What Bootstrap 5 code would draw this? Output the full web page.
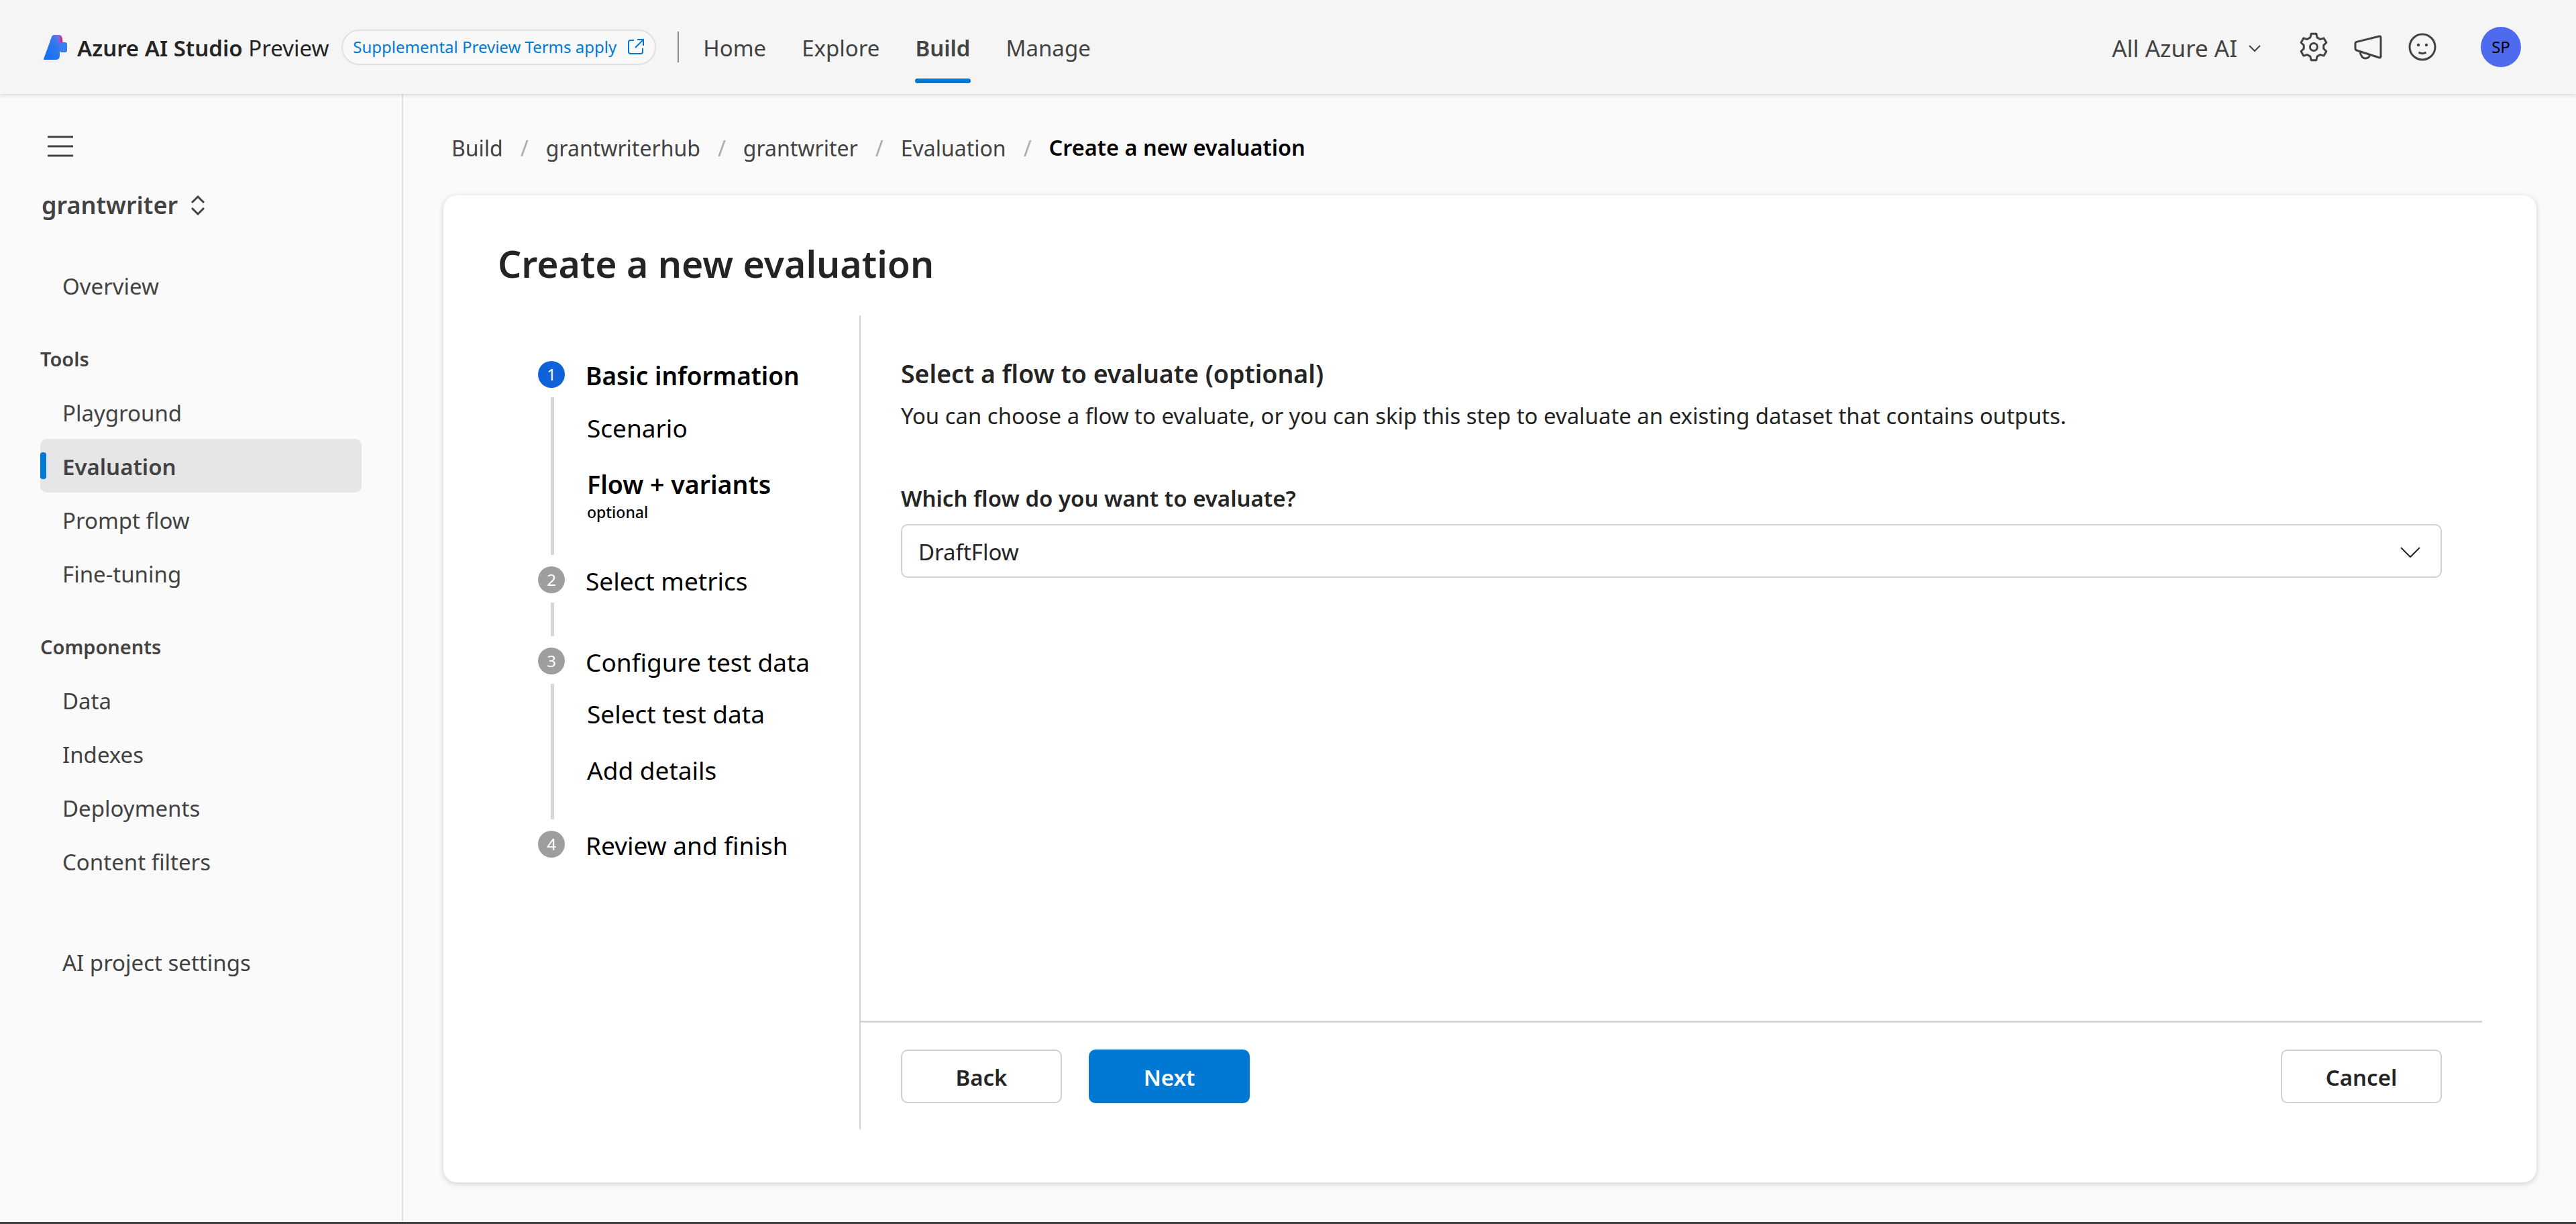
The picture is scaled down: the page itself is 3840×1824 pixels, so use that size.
<!DOCTYPE html>
<html lang="en">
<head>
<meta charset="utf-8">
<title>Create a new evaluation</title>
<link href="https://cdn.jsdelivr.net/npm/bootstrap@5.3.0/dist/css/bootstrap.min.css" rel="stylesheet">
<style>
html,body{height:100%;}
body{font-family:"Noto Sans","Open Sans",sans-serif;font-size:33px;color:#242424;background:#fafafa;overflow:hidden;}
.shell{height:1824px;border-bottom:3px solid #444;}
.topbar{height:140px;flex:none;background:#f5f5f5;box-shadow:0 2px 5px rgba(0,0,0,.14);position:relative;z-index:2;padding:0 82px 0 65px;}
.brand-logo{width:35px;height:37px;flex:none;}
.brand{margin-left:15px;color:#242424;white-space:nowrap;font-size:33px;padding-top:4px;}
.brand b{font-weight:600;}
.terms-pill{margin-left:19px;height:53px;width:469px;border:2px solid #e0e0e0;border-radius:27px;color:#0078d4;font-size:24px;background:#f8f8f8;padding:0 16px 0 15px;white-space:nowrap;}
.bar-div{width:2px;height:46px;background:#8a8a8a;margin:0 36px 0 32px;}
.top-nav{gap:53px;height:140px;}
.top-link{color:#424242;height:140px;display:flex;align-items:center;position:relative;text-decoration:none;font-size:33px;padding-top:4px;}
.top-link.sel{font-weight:600;}
.top-link.sel::after{content:"";position:absolute;left:0;right:0;top:117px;height:7px;background:#0078d4;border-radius:4px;}
.scope{font-size:35px;color:#424242;white-space:nowrap;padding-top:4px;}
.tool-row{gap:37px;margin-left:56px;}
.tool-ico{width:44px;height:44px;flex:none;}
.avatar{width:60px;height:60px;background:#4f6bed;color:#000;font-size:24px;flex:none;margin-left:28px;}
.body-row{height:1681px;}
.sidenav{width:601px;flex:none;background:#fafafa;border-right:2px solid #e0e0e0;padding:62px 60px 0 60px;}
.ham{width:38px;height:32px;margin-left:11px;display:block;}
.proj{font-size:36px;font-weight:600;color:#424242;margin:46px 0 0 2px;line-height:52px;}
.proj svg{margin-left:18px;}
.nav-item-x{display:flex;align-items:center;height:80px;padding:4px 0 0 33px;color:#424242;text-decoration:none;position:relative;border-radius:10px;font-size:33px;}
.nav-item-x.sel{background:#e6e6e6;font-weight:600;}
.nav-item-x.sel::before{content:"";position:absolute;left:0;top:20px;height:40px;width:9px;background:#0078d4;border-radius:4px;}
.nav-head{font-size:29px;font-weight:600;color:#424242;height:40px;display:flex;align-items:center;}
.nav-first{margin-top:53px;}
.nav-block{margin:19px 0 2px;}
.nav-gap{margin-top:50px;}
.nav-last{margin-top:70px;}
.crumbs{height:151px;padding:10px 0 0 72px;margin:0;font-size:32px;color:#424242;}
.crumb-sep{color:#adadad;margin:0 26px;}
.crumb-cur{font-weight:600;color:#000;font-size:32.5px;}
.main-x{min-width:0;}
.panel{margin:0 59px 0 60px;height:1471px;background:#fff;border-radius:20px;box-shadow:0 2px 8px rgba(0,0,0,.18);padding:0 0 0 81px;}
.panel-title{font-size:55.3px;font-weight:600;color:#242424;height:179px;margin:0;padding-top:66px;line-height:72px;}
.panel-body{height:1213px;}
.steps{width:539px;flex:none;padding:68px 0 0 60px;color:#000;}
.step-head{height:40px;display:flex;align-items:center;font-size:37px;white-space:nowrap;}
.step-label{padding-top:3px;}
.step-num{width:40px;height:40px;border-radius:50%;background:#9e9e9e;color:#fff;font-size:24px;flex:none;margin-right:31px;}
.step-num.on{background:#0f62d8;}
.step-head.on{font-weight:600;}
.step-rail{display:flow-root;border-left:5px solid #d6d6d6;margin:14px 0 17px 19px;padding-left:49px;}
.rail-short{height:50px;}
.sub-step{font-size:37px;line-height:48px;white-space:nowrap;margin-top:36px;}
.sub-step.first{margin-top:22px;}
.sub-step.first-b{margin-top:21px;}
.sub-step.on{font-weight:600;font-size:37.5px;}
.opt{font-size:23px;line-height:24px;font-weight:500;margin-top:5px;}
.rail-end{height:52px;}
.rail-end-b{height:49px;}
.wizard{flex:1 1 auto;border-left:2px solid #d1d1d1;min-width:0;}
.wiz-main{flex:1 1 auto;padding:0 141px 0 60px;position:relative;}
.wiz-h{font-size:37.5px;font-weight:600;color:#242424;margin:0;padding-top:63px;line-height:48px;}
.wiz-p{font-size:32.9px;margin:15px 0 0;color:#242424;line-height:48px;}
.wiz-l{font-size:33px;font-weight:600;color:#242424;margin:75px 0 0;line-height:48px;display:block;}
.flow-select{height:80px;margin:14px 0 0;border:2px solid #d1d1d1;border-radius:10px;font-size:33px;padding:3px 30px 0 24px;color:#242424;background:#fff;}
.wiz-foot{height:162px;flex:none;border-top:3px solid #d6d6d6;margin-right:81px;padding:40px 60px 0 60px;}
.btn-x{width:240px;height:80px;border-radius:10px;font-size:33px;font-weight:600;padding:2px 0 0;line-height:1;}
.btn-ghost{background:#fff;border:2px solid #d1d1d1;color:#242424;}
.btn-go{background:#0078d4;border:2px solid #0078d4;color:#fff;margin-left:40px;}
</style>
</head>
<body>
<div class="shell d-flex flex-column">
  <header class="topbar d-flex align-items-center">
    <svg class="brand-logo" viewBox="0 0 35 37"><defs><linearGradient id="lg" x1="0" y1="1" x2="1" y2="0"><stop offset="0" stop-color="#0f6cf0"/><stop offset=".65" stop-color="#2f78ee"/><stop offset="1" stop-color="#7f6fe0"/></linearGradient></defs><path d="M23 0 Q27 0 28 6 L29 14 H24 Z" fill="#cf2d9c"/><path d="M0 36 L12 3 Q13 0 16 0 H24 V31 Q24 37 18 37 H1 Q0 37 0 36Z" fill="url(#lg)"/><rect x="24" y="11" width="11" height="15" rx="3" fill="#3a7df0"/></svg>
    <span class="brand"><b>Azure AI Studio</b> Preview</span>
    <span class="terms-pill d-inline-flex align-items-center justify-content-between">Supplemental Preview Terms apply <svg width="25" height="24" viewBox="0 0 25 24" fill="none" stroke="#0078d4" stroke-width="2"><path d="M10 2H5Q2 2 2 5V19Q2 22 5 22H20Q23 22 23 19V14M15 1H24V10M24 1L12 13"/></svg></span>
    <span class="bar-div"></span>
    <nav class="top-nav d-flex">
      <a class="top-link" href="#">Home</a><a class="top-link" href="#">Explore</a><a class="top-link sel" href="#">Build</a><a class="top-link" href="#">Manage</a>
    </nav>
    <span class="scope ms-auto d-inline-flex align-items-center gap-3">All Azure AI <svg width="20" height="12" viewBox="0 0 20 12" fill="none" stroke="#424242" stroke-width="2"><path d="M2 2L10 10L18 2"/></svg></span>
    <div class="tool-row d-flex align-items-center">
      <svg class="tool-ico" viewBox="0 0 44 44" fill="none" stroke="#424242" stroke-width="3" stroke-linejoin="round"><circle cx="22" cy="22" r="5.500"/><path d="M16.870 7.900L18.180 2.370H25.820L27.130 7.900L31.640 10.510L37.090 8.880L40.910 15.490L36.770 19.400V24.600L40.910 28.510L37.090 35.120L31.640 33.490L27.130 36.100L25.820 41.630H18.180L16.870 36.100L12.360 33.490L6.910 35.120L3.090 28.510L7.230 24.600V19.400L3.090 15.490L6.910 8.880L12.360 10.510Z"/></svg>
      <svg class="tool-ico" viewBox="0 0 44 44" fill="none" stroke="#424242" stroke-width="3" stroke-linejoin="round"><path d="M41 8V36Q41 38.500 39 38L5 27Q3 26.300 3 24V17Q3 15 5 14.400L39 6Q41 5.500 41 8Z"/><path d="M10 29Q12 39 18 39Q23 39 25 34"/></svg>
      <svg class="tool-ico" viewBox="0 0 44 44" fill="none" stroke="#424242" stroke-width="3"><circle cx="22" cy="22" r="19"/><circle cx="16" cy="19" r="2.200" fill="#424242" stroke="none"/><circle cx="28" cy="19" r="2.200" fill="#424242" stroke="none"/><path d="M16.500 30Q22 33.500 27.500 30"/></svg>
      <span class="avatar rounded-circle d-flex align-items-center justify-content-center">SP</span>
    </div>
  </header>
  <div class="body-row d-flex">
    <aside class="sidenav">
      <svg class="ham" viewBox="0 0 38 32" stroke="#424242" stroke-width="3"><path d="M0 2H38M0 16H38M0 30H38"/></svg>
      <div class="proj d-flex align-items-center">grantwriter <svg width="24" height="32" viewBox="0 0 24 32" fill="none" stroke="#424242" stroke-width="3"><path d="M3 12L12 3L21 12M3 20L12 29L21 20"/></svg></div>
      <a class="nav-item-x nav-first" href="#">Overview</a>
      <div class="nav-head nav-gap">Tools</div>
      <div class="nav-block">
      <a class="nav-item-x" href="#">Playground</a>
      <a class="nav-item-x sel" href="#">Evaluation</a>
      <a class="nav-item-x" href="#">Prompt flow</a>
      <a class="nav-item-x" href="#">Fine-tuning</a>
      </div>
      <div class="nav-head nav-gap">Components</div>
      <div class="nav-block">
      <a class="nav-item-x" href="#">Data</a>
      <a class="nav-item-x" href="#">Indexes</a>
      <a class="nav-item-x" href="#">Deployments</a>
      <a class="nav-item-x" href="#">Content filters</a>
      </div>
      <a class="nav-item-x nav-last" href="#">AI project settings</a>
    </aside>
    <main class="main-x flex-grow-1">
      <nav class="crumbs d-flex align-items-center">
        <span>Build</span><span class="crumb-sep">/</span><span>grantwriterhub</span><span class="crumb-sep">/</span><span>grantwriter</span><span class="crumb-sep">/</span><span>Evaluation</span><span class="crumb-sep">/</span><span class="crumb-cur">Create a new evaluation</span>
      </nav>
      <section class="panel">
        <h1 class="panel-title">Create a new evaluation</h1>
        <div class="panel-body d-flex">
          <div class="steps">
            <div class="step-head on"><span class="step-num on d-flex align-items-center justify-content-center fw-normal">1</span><span class="step-label">Basic information</span></div>
            <div class="step-rail">
              <div class="sub-step first">Scenario</div>
              <div class="sub-step on">Flow + variants</div>
              <div class="opt">optional</div>
              <div class="rail-end"></div>
            </div>
            <div class="step-head"><span class="step-num d-flex align-items-center justify-content-center">2</span><span class="step-label">Select metrics</span></div>
            <div class="step-rail rail-short"></div>
            <div class="step-head"><span class="step-num d-flex align-items-center justify-content-center">3</span><span class="step-label">Configure test data</span></div>
            <div class="step-rail">
              <div class="sub-step first-b">Select test data</div>
              <div class="sub-step">Add details</div>
              <div class="rail-end-b"></div>
            </div>
            <div class="step-head"><span class="step-num d-flex align-items-center justify-content-center">4</span><span class="step-label">Review and finish</span></div>
          </div>
          <div class="wizard d-flex flex-column">
            <div class="wiz-main">
              <h2 class="wiz-h">Select a flow to evaluate (optional)</h2>
              <p class="wiz-p">You can choose a flow to evaluate, or you can skip this step to evaluate an existing dataset that contains outputs.</p>
              <label class="wiz-l">Which flow do you want to evaluate?</label>
              <div class="flow-select d-flex align-items-center justify-content-between">DraftFlow <svg width="30" height="18" viewBox="0 0 30 18" fill="none" stroke="#242424" stroke-width="2"><path d="M1 2L15 16L29 2"/></svg></div>
            </div>
            <div class="wiz-foot d-flex">
              <button class="btn btn-x btn-ghost" type="button">Back</button>
              <button class="btn btn-x btn-go" type="button">Next</button>
              <button class="btn btn-x btn-ghost ms-auto" type="button">Cancel</button>
            </div>
          </div>
        </div>
      </section>
    </main>
  </div>
</div>
<script src="https://cdn.jsdelivr.net/npm/bootstrap@5.3.0/dist/js/bootstrap.bundle.min.js"></script>
</body>
</html>
